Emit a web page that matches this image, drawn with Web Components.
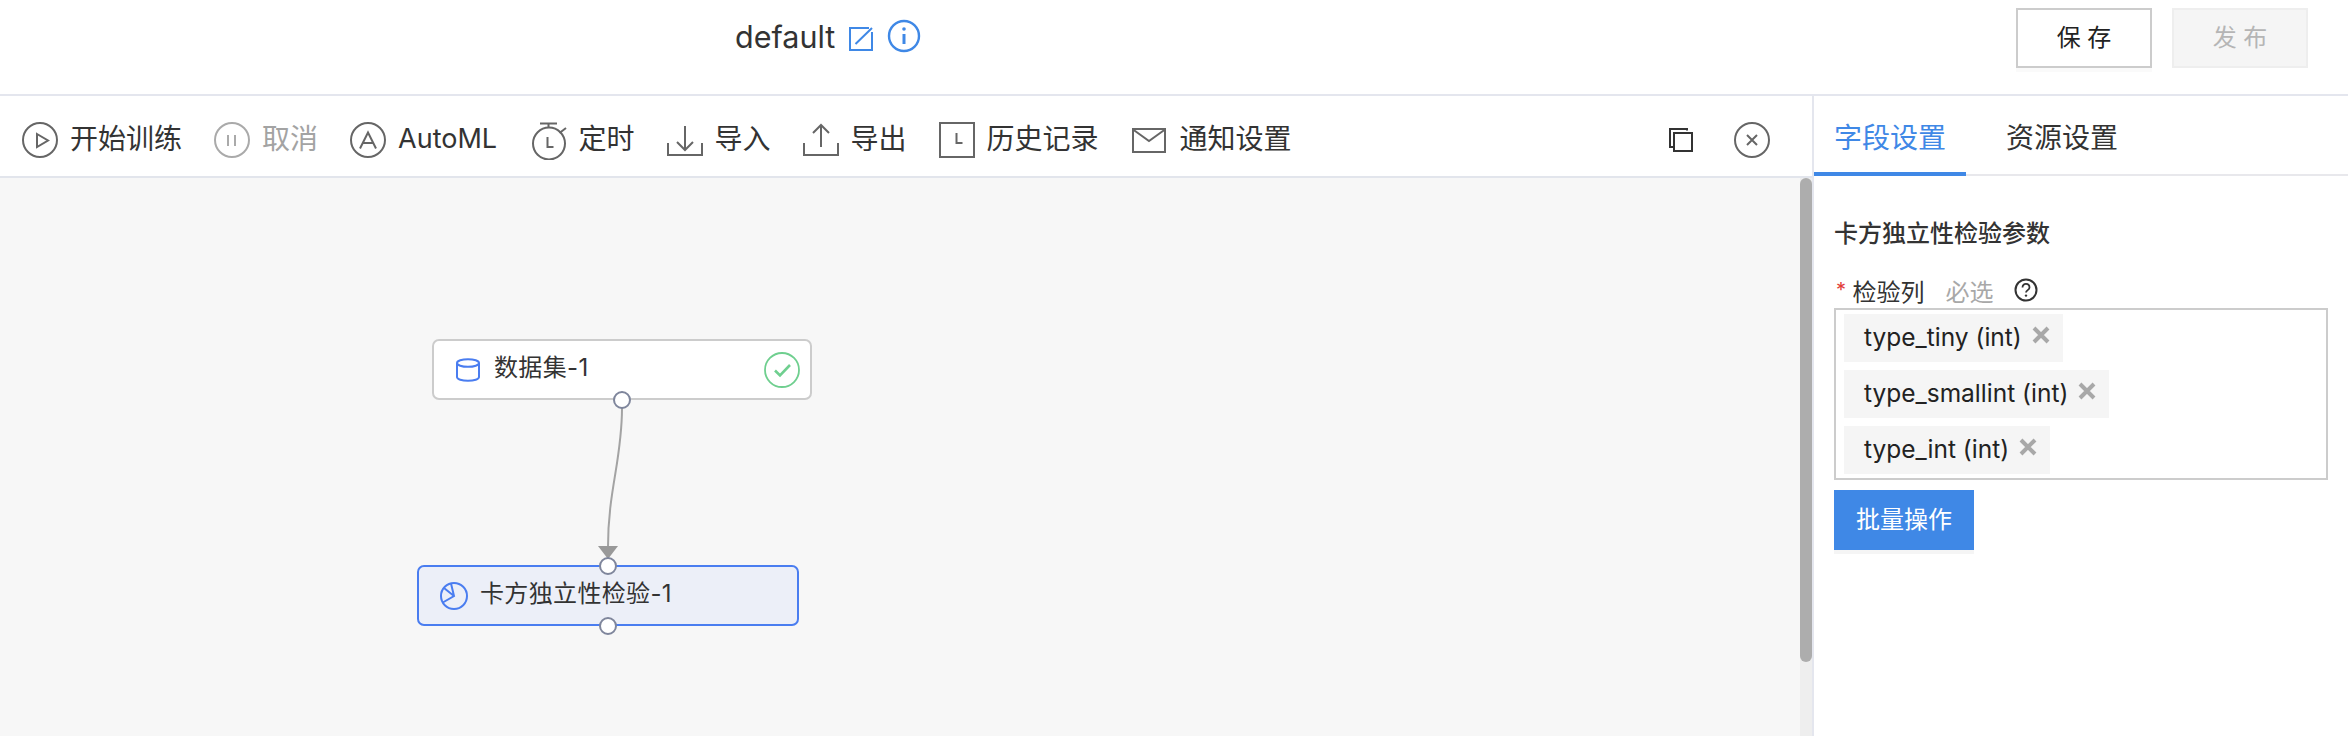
<!DOCTYPE html>
<html lang="zh">
<head>
<meta charset="utf-8">
<title>default</title>
<style>
html,body{margin:0;padding:0;background:#fff;}
body{width:2348px;height:736px;overflow:hidden;font-family:Inter,"Noto Sans CJK SC",sans-serif;color:#333;}
</style>
</head>
<body>
<x-app>
  <x-header slot="header"></x-header>
  <x-toolbar slot="toolbar">
    <x-tool label="开始训练" icon="play"></x-tool>
    <x-tool label="取消" icon="pause" disabled></x-tool>
    <x-tool label="AutoML" icon="auto"></x-tool>
    <x-tool label="定时" icon="timer"></x-tool>
    <x-tool label="导入" icon="import"></x-tool>
    <x-tool label="导出" icon="export"></x-tool>
    <x-tool label="历史记录" icon="history"></x-tool>
    <x-tool label="通知设置" icon="mail" style="margin-left:1px"></x-tool>
  </x-toolbar>
  <x-canvas slot="canvas">
    <x-node style="left:432px;top:161px" kind="data" status="ok" label="数据集-1"></x-node>
    <x-node style="left:417px;top:387px" kind="chart" selected label="卡方独立性检验-1"></x-node>
  </x-canvas>
  <x-panel slot="panel">
    <x-tag>type_tiny (int)</x-tag>
    <x-tag>type_smallint (int)</x-tag>
    <x-tag>type_int (int)</x-tag>
  </x-panel>
</x-app>
<script>
const ICONS = {
  play:'<circle cx="18" cy="18" r="17"/><path d="M15 12 26 18.5 15 25Z"/>',
  pause:'<circle cx="18" cy="18" r="17"/><path d="M14 13v11M21 13v11"/>',
  auto:'<circle cx="18" cy="18" r="17"/><path d="M10 26.5 18 10.5 26 26.5M12.5 21h11"/>',
  timer:'<circle cx="18" cy="21.5" r="16"/><path d="M9 1.5h17M17.5 1.5v4M28.5 11 35 6"/><path d="M16.5 15v10h6"/>',
  import:'<path d="M1 21v12h34V21M18 4v24M10 20l8 8 8-8"/>',
  export:'<path d="M1 21v12h34V21M18 25V3M10 11l8-8 8 8"/>',
  history:'<rect x="1" y="1" width="34" height="34"/><path d="M17.5 11v10h6"/>',
  mail:'<rect x="1" y="7" width="32" height="23"/><path d="M1 7.5 17 19 33 7.5"/>'
};

class XApp extends HTMLElement{
  constructor(){super();this.attachShadow({mode:'open'}).innerHTML=`
  <style>
    :host{display:flex;flex-direction:column;width:2348px;height:736px;}
    .main{flex:1;display:flex;min-height:0;}
    .left{flex:1;display:flex;flex-direction:column;min-width:0;}
  </style>
  <slot name="header"></slot>
  <div class="main">
    <div class="left"><slot name="toolbar"></slot><slot name="canvas"></slot></div>
    <slot name="panel"></slot>
  </div>`;}
}
class XHeader extends HTMLElement{
  constructor(){super();this.attachShadow({mode:'open'}).innerHTML=`
  <style>
    :host{display:flex;align-items:center;height:94px;border-bottom:2px solid #e4e6ee;box-sizing:content-box;position:relative;flex:none;}
    .title{display:flex;align-items:center;margin-left:735px;height:74px;margin-bottom:20px;}
    .name{font-size:30.5px;line-height:40px;color:#333;width:114px;}
    .edit{width:24px;height:24px;display:block;margin-top:4px;}
    .info{width:34px;height:34px;display:block;margin-left:14px;margin-top:-2px;}
    .btns{margin-left:auto;margin-right:40px;display:flex;gap:20px;align-self:flex-start;margin-top:8px;}
    button{width:136px;height:60px;box-sizing:border-box;font:24px/1 Inter,"Noto Sans CJK SC",sans-serif;padding:0;margin:0;}
    .save{background:#fff;border:2px solid #ccc;color:#222;box-shadow:0 4px 0 #fafafa;}
    .pub{background:#f5f5f5;border:2px solid #eee;color:#b5b5b5;}
  </style>
  <div class="title">
    <span class="name">default</span>
    <svg class="edit" viewBox="0 0 24 24" fill="none" stroke="#3f88e6" stroke-width="2"><path d="M20 1H1v22h22V5M23 1 6.5 17"/></svg>
    <svg class="info" viewBox="0 0 34 34" fill="none" stroke="#3f88e6" stroke-width="2.4"><circle cx="17" cy="17" r="15"/><path d="M17 15v10" stroke-width="3"/><circle cx="17" cy="10" r="1.8" fill="#3f88e6" stroke="none"/></svg>
  </div>
  <div class="btns"><button class="save">保 存</button><button class="pub">发 布</button></div>`;}
}
class XToolbar extends HTMLElement{
  constructor(){super();this.attachShadow({mode:'open'}).innerHTML=`
  <style>
    :host{display:flex;align-items:center;height:80px;border-bottom:2px solid #e2e5ec;padding-left:22px;gap:32px;flex:none;}
    .end{margin-left:auto;display:flex;align-items:center;margin-right:42px;gap:41px;margin-top:8px;}
    svg{display:block;}
  </style>
  <slot></slot>
  <div class="end">
    <svg width="24" height="24" viewBox="0 0 24 24" fill="none" stroke="#333" stroke-width="2"><path d="M18 2.5V1H1v18h3"/><rect x="5" y="5" width="18" height="18"/></svg>
    <svg width="36" height="36" viewBox="0 0 36 36" fill="none" stroke="#666" stroke-width="2"><circle cx="18" cy="18" r="17"/><path d="M13 13 23 23M23 13 13 23"/></svg>
  </div>`;}
}
class XTool extends HTMLElement{
  constructor(){super();
    const dis=this.hasAttribute('disabled');
    const c=dis?'#aaa':'#666';
    const timer=this.getAttribute('icon')==='timer';
    const h=timer?38:36;
    this.attachShadow({mode:'open'}).innerHTML=`
  <style>
    :host{display:flex;align-items:center;gap:12px;height:80px;font-size:28px;color:${dis?'#a3a3a3':'#333'};}
    svg{display:block;flex:none;margin-top:${timer?10:8}px;}
    span{line-height:40px;margin-top:5px;white-space:nowrap;}
    span.l{font-size:27px;margin-right:1.5px;}
  </style>
  <svg width="36" height="${h}" viewBox="0 0 36 ${h}" fill="none" stroke="${c}" stroke-width="2">${ICONS[this.getAttribute('icon')]}</svg>
  <span class="${/^[A-Za-z]/.test(this.getAttribute('label'))?'l':''}">${this.getAttribute('label')}</span>`;}
}
class XCanvas extends HTMLElement{
  constructor(){super();this.attachShadow({mode:'open'}).innerHTML=`
  <style>
    :host{display:flex;flex:1;min-height:0;background:#f7f7f7;}
    .area{flex:1;position:relative;overflow:hidden;}
    svg{position:absolute;left:0;top:0;}
    .bar{width:12px;background:#eee;flex:none;}
    .thumb{height:484px;background:#adadad;border-radius:6px;}
  </style>
  <div class="area">
    <svg width="1800" height="558" fill="none">
      <path d="M622 230C622 282 608 312 608 369" stroke="#a3a3a3" stroke-width="2"/>
      <path d="M598 368H618L608 381Z" fill="#999"/>
    </svg>
    <slot></slot>
  </div>
  <div class="bar"><div class="thumb"></div></div>`;}
}
class XNode extends HTMLElement{
  constructor(){super();
    const sel=this.hasAttribute('selected');
    const data=this.getAttribute('kind')==='data';
    const icon=data
      ?'<svg class="ic" width="24" height="24" viewBox="0 0 24 24" fill="none" stroke="#4a7df0" stroke-width="2"><ellipse cx="12" cy="5" rx="11" ry="3.8"/><path d="M1 5v14c0 2.2 5 3.8 11 3.8s11-1.6 11-3.8V5"/></svg>'
      :'<svg class="ic" width="28" height="28" viewBox="0 0 28 28" fill="none" stroke="#4a7df0" stroke-width="2"><circle cx="14" cy="14" r="13"/><path d="M11 1.5 14 14 2.8 20.5M4 6 14 14"/></svg>';
    const ok=this.getAttribute('status')==='ok'
      ?'<svg class="st" width="36" height="36" viewBox="0 0 36 36" fill="none" stroke="#6fcf8f" stroke-width="1.8"><circle cx="18" cy="18" r="17"/><path d="M11 18.5 16 23.5 26 13" stroke-width="2.6"/></svg>':'';
    this.attachShadow({mode:'open'}).innerHTML=`
  <style>
    :host{position:absolute;display:flex;align-items:center;box-sizing:border-box;width:${sel?382:380}px;height:61px;
      border:2px solid ${sel?'#4a7df0':'#ccc'};border-radius:7px;background:${sel?'#eceff8':'#fff'};
      padding-left:${sel?21:22}px;font-size:24px;color:#333;}
    .ic{display:block;flex:none;}
    .t{margin-left:${sel?12:14}px;line-height:34px;margin-top:-4px;white-space:nowrap;letter-spacing:.35px;}
    .st{position:absolute;right:10px;top:11px;display:block;}
    .p{position:absolute;left:50%;width:18px;height:18px;margin-left:-9px;box-sizing:border-box;border-radius:50%;background:#fff;border:2px solid #7f869c;}
    .bot{bottom:-11px;}
    .top{top:-10px;}
  </style>
  ${icon}<span class="t">${this.getAttribute('label')}</span>${ok}
  ${sel?'<i class="p top"></i>':''}<i class="p bot"></i>`;}
}
class XTag extends HTMLElement{
  constructor(){super();this.attachShadow({mode:'open'}).innerHTML=`
  <style>
    :host{display:flex;align-items:center;width:max-content;height:48px;background:#f5f5f5;padding:0 13px 0 20px;margin-bottom:8px;font-size:24.5px;color:#222;}
    :host(:last-child){margin-bottom:0;}
    span{margin-top:-2px;}
    svg{display:block;margin-left:10px;margin-top:-6px;}
  </style>
  <span><slot></slot></span>
  <svg width="18" height="18" viewBox="0 0 18 18" fill="none" stroke="#a8a8a8" stroke-width="4"><path d="M2 2 16 16M16 2 2 16"/></svg>`;}
}
class XPanel extends HTMLElement{
  constructor(){super();this.attachShadow({mode:'open'}).innerHTML=`
  <style>
    :host{display:block;width:534px;flex:none;border-left:2px solid #e4e6ee;}
    .tabs{display:flex;height:78px;border-bottom:2px solid #e8e8ec;position:relative;font-size:28px;}
    .tab{width:152px;box-sizing:border-box;padding-left:20px;line-height:85px;height:80px;}
    .tab.on{color:#3f88e6;border-bottom:4px solid #3f88e6;}
    .tab+.tab{margin-left:20px;}
    .body{padding:40px 20px 0;}
    h3{margin:0;font-size:24px;font-weight:500;line-height:36px;color:#333;}
    .lab{display:flex;align-items:center;height:36px;margin-top:20px;font-size:24px;}
    .star{color:#e23c39;width:18.5px;padding-left:2px;box-sizing:border-box;font-size:20px;}
    .hint{color:#a8a8a8;margin-left:21px;}
    .q{display:block;margin-left:20px;margin-top:-1px;}
    .box{border:2px solid #ccc;padding:4px 8px;}
    .go{display:block;margin-top:10px;width:140px;height:60px;background:#3f88e6;border:0;color:#fff;font:24px/1 Inter,"Noto Sans CJK SC",sans-serif;padding:0;box-shadow:0 4px 0 #f5f5f5;}
  </style>
  <div class="tabs"><div class="tab on">字段设置</div><div class="tab">资源设置</div></div>
  <div class="body">
    <h3>卡方独立性检验参数</h3>
    <div class="lab"><span class="star">*</span><span>检验列</span><span class="hint">必选</span>
      <svg class="q" width="24" height="24" viewBox="0 0 24 24" fill="none" stroke="#333" stroke-width="2"><circle cx="12" cy="12" r="10.5"/><path d="M8.5 9.5c0-5 7-4.5 7 0 0 2.6-3.5 2.6-3.5 5" stroke-width="1.8"/><circle cx="12" cy="17.6" r="1.2" fill="#333" stroke="none"/></svg>
    </div>
    <div class="box"><slot></slot></div>
    <button class="go">批量操作</button>
  </div>`;}
}
customElements.define('x-app',XApp);
customElements.define('x-header',XHeader);
customElements.define('x-toolbar',XToolbar);
customElements.define('x-tool',XTool);
customElements.define('x-canvas',XCanvas);
customElements.define('x-node',XNode);
customElements.define('x-tag',XTag);
customElements.define('x-panel',XPanel);
</script>
</body>
</html>
